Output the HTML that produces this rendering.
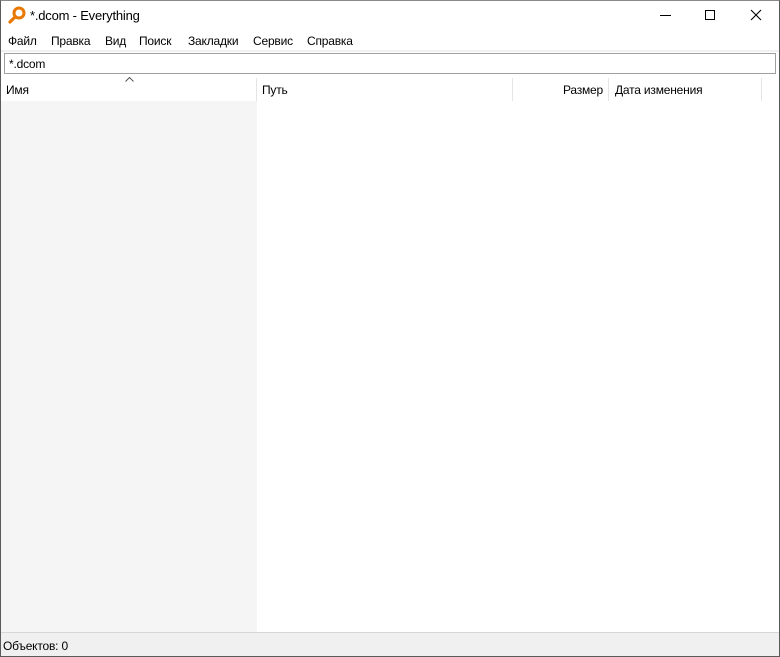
<!DOCTYPE html>
<html><head><meta charset="utf-8"><style>
*{margin:0;padding:0;box-sizing:border-box}
body{width:780px;height:657px;overflow:hidden;background:#fff;font-family:"Liberation Sans",sans-serif;font-size:12px;letter-spacing:-0.2px;color:#000;position:relative}
.win{position:absolute;left:0;top:0;width:780px;height:657px;border:1px solid #5a5a5a;border-top:1px solid #888;background:#fff}
.abs{position:absolute;white-space:nowrap}
</style></head><body>
<div class="win"></div>
<svg class="abs" style="left:8px;top:6px" width="18" height="18" viewBox="0 0 18 18">
<circle cx="11" cy="7" r="5" fill="none" stroke="#e87800" stroke-width="3"/>
<line x1="7" y1="11" x2="2" y2="16" stroke="#e87800" stroke-width="3.2" stroke-linecap="round"/>
</svg>
<div class="abs" style="left:30px;top:8px;font-size:13px">*.dcom - Everything</div>
<div class="abs" style="left:660px;top:15px;width:11px;height:1px;background:#000"></div>
<div class="abs" style="left:705px;top:10px;width:10px;height:10px;border:1px solid #000"></div>
<svg class="abs" style="left:750px;top:9px" width="12" height="12"><path d="M1 1L11 11M11 1L1 11" stroke="#000" stroke-width="1.1"/></svg>
<div class="abs" style="left:8px;top:34px">Файл</div>
<div class="abs" style="left:51px;top:34px">Правка</div>
<div class="abs" style="left:105px;top:34px">Вид</div>
<div class="abs" style="left:139px;top:34px">Поиск</div>
<div class="abs" style="left:188px;top:34px">Закладки</div>
<div class="abs" style="left:253px;top:34px">Сервис</div>
<div class="abs" style="left:307px;top:34px">Справка</div>
<div class="abs" style="left:1px;top:50px;width:778px;height:2px;background:#f0f0f0"></div>
<div class="abs" style="left:4px;top:53px;width:772px;height:21px;border:1px solid #a0a0a0"></div>
<div class="abs" style="left:9px;top:57px">*.dcom</div>
<svg class="abs" style="left:125px;top:77px" width="9" height="5"><path d="M0.5 4.5L4.5 0.5L8.5 4.5" fill="none" stroke="#555"/></svg>
<div class="abs" style="left:6px;top:83px">Имя</div>
<div class="abs" style="left:262px;top:83px">Путь</div>
<div class="abs" style="left:503px;width:100px;text-align:right;top:83px">Размер</div>
<div class="abs" style="left:615px;top:83px">Дата изменения</div>
<div class="abs" style="left:256px;top:78px;width:1px;height:23px;background:#e5e5e5"></div>
<div class="abs" style="left:512px;top:78px;width:1px;height:23px;background:#e5e5e5"></div>
<div class="abs" style="left:608px;top:78px;width:1px;height:23px;background:#e5e5e5"></div>
<div class="abs" style="left:761px;top:78px;width:1px;height:23px;background:#e5e5e5"></div>
<div class="abs" style="left:1px;top:101px;width:256px;height:532px;background:#f5f5f5"></div>
<div class="abs" style="left:1px;top:632px;width:778px;height:24px;background:#f0f0f0;border-top:1px solid #d7d7d7"></div>
<div class="abs" style="left:3px;top:639px">Объектов: 0</div>
</body></html>
